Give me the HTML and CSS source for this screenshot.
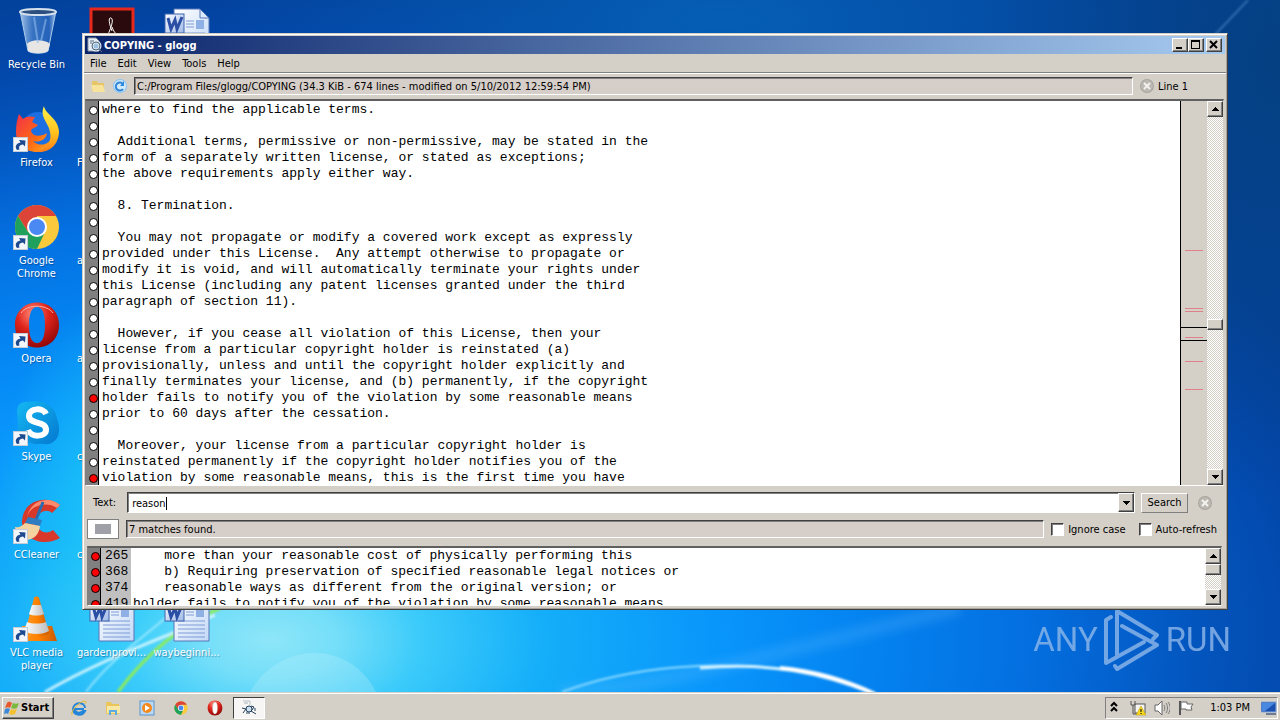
FILE: index.html
```html
<!DOCTYPE html>
<html lang="en">
<head>
    <meta charset="utf-8">
    <title>COPYING - glogg</title>
    <link rel="stylesheet" href="styles.css">
</head>
<body>

<!-- shared icon shapes -->
<svg class="defs" width="0" height="0" aria-hidden="true">
    <defs>
        <linearGradient id="paper" x1="0" y1="0" x2="1" y2="1"><stop offset="0" stop-color="#fff"/><stop offset="1" stop-color="#c3d8f7"/></linearGradient>
        <linearGradient id="blueW" x1="0" y1="0" x2="1" y2="1"><stop offset="0" stop-color="#fff"/><stop offset="1" stop-color="#9db8e6"/></linearGradient>
        <radialGradient id="opera" cx=".4" cy=".25" r=".8"><stop offset="0" stop-color="#ff8a78"/><stop offset=".45" stop-color="#e0251c"/><stop offset="1" stop-color="#8c0505"/></radialGradient>
        <linearGradient id="ffYellow" x1="0" y1="0" x2="0" y2="1"><stop offset="0" stop-color="#fff14a"/><stop offset=".6" stop-color="#ffc01c"/><stop offset="1" stop-color="#ff7a1c"/></linearGradient>
        <linearGradient id="ffRed" x1="0" y1="0" x2="1" y2="1"><stop offset="0" stop-color="#f0304a"/><stop offset=".6" stop-color="#ff6a14"/><stop offset="1" stop-color="#ffb020"/></linearGradient>
        <linearGradient id="skype" x1="0" y1="0" x2="1" y2="1"><stop offset="0" stop-color="#14b8f2"/><stop offset="1" stop-color="#0478d0"/></linearGradient>
        <linearGradient id="cone" x1="0" y1="0" x2="1" y2="0"><stop offset="0" stop-color="#ff9a2a"/><stop offset=".5" stop-color="#ff8200"/><stop offset="1" stop-color="#c95a00"/></linearGradient>
        <linearGradient id="coneW" x1="0" y1="0" x2="1" y2="0"><stop offset="0" stop-color="#fff"/><stop offset="1" stop-color="#bdbdbd"/></linearGradient>
        <linearGradient id="glass" x1="0" y1="0" x2="1" y2="0"><stop offset="0" stop-color="#bcd6f2" stop-opacity=".9"/><stop offset=".35" stop-color="#5c93d8" stop-opacity=".6"/><stop offset=".8" stop-color="#3b76c8" stop-opacity=".6"/><stop offset="1" stop-color="#c6dcf5" stop-opacity=".9"/></linearGradient>

        <symbol id="shortcut" viewBox="0 0 15 15">
            <rect x="0.5" y="0.5" width="14" height="14" fill="#f2f6fb" stroke="#c4ccd8"/>
            <path d="M4 13C1.500 9.500 3 6.500 7.500 5.500L6 3L12.500 3.500L12 9.500L10 7.500C6.500 8 5.500 9.500 6.500 12.500Z" fill="#1d4a8f"/>
        </symbol>
        <symbol id="word" viewBox="0 0 48 48">
            <path d="M11 2H37L46 11V46H11Z" fill="url(#paper)" stroke="#5876b8"/>
            <path d="M37 2V11H46Z" fill="#dce8fb" stroke="#5876b8"/>
            <rect x="33" y="13" width="8" height="9" fill="#8fb0e4"/>
            <path d="M23 14H31M23 17H31M23 20H31M15 26H42M15 30H42M15 34H42M15 38H42M15 42H42" stroke="#7d9cd6"/>
            <rect x="2" y="7" width="19" height="19" fill="url(#blueW)" stroke="#3f63ad"/>
            <path d="M5 11L8 22L12 13L14 22L19 10" fill="none" stroke="#2a4fa5" stroke-width="3"/>
        </symbol>
        <symbol id="chrome" viewBox="0 0 48 48">
            <circle cx="24" cy="24" r="22" fill="#fbc93c"/>
            <path d="M5 13L15 29L24 24L24 13H43A22 22 0 0 0 5 13Z" fill="#dc4437"/>
            <path d="M5 13A22 22 0 0 0 24 46L31 31L15 29Z" fill="#1fa15d"/>
            <circle cx="24" cy="24" r="10" fill="#fff"/>
            <circle cx="24" cy="24" r="8" fill="#4a88f4"/>
        </symbol>
        <symbol id="operaIcon" viewBox="0 0 48 48">
            <path fill="url(#opera)" fill-rule="evenodd" d="M24 1.500C37 1.500 46 11 46 24C46 37 37 46.500 24 46.500C11 46.500 2 37 2 24C2 11 11 1.500 24 1.500ZM24 6C18 6 16 14 16 24C16 34 18 42 24 42C30 42 32 34 32 24C32 14 30 6 24 6Z"/>
            <path d="M8 12C14 3 34 3 40 12" stroke="#ffb0a4" stroke-width="1" fill="none"/>
        </symbol>
        <symbol id="closeRound" viewBox="0 0 16 16">
            <circle cx="8" cy="8" r="7" fill="#a8a49e"/>
            <circle cx="8" cy="8" r="6" fill="#bcb8b2"/>
            <path d="M5 5L11 11M11 5L5 11" stroke="#f4f2ee" stroke-width="2"/>
        </symbol>
        <symbol id="up" viewBox="0 0 7 4"><path d="M3 0h1v1h1v1h1v1h1v1H0V3h1V2h1V1h1z" fill="#000"/></symbol>
        <symbol id="down" viewBox="0 0 7 4"><path d="M0 0h7v1H6v1H5v1H4v1H3V3H2V2H1V1H0z" fill="#000"/></symbol>
    </defs>
</svg>

<main class="desktop">
    <svg class="wallpaper" viewBox="0 0 1280 692" preserveAspectRatio="none" aria-hidden="true">
        <defs>
            <radialGradient id="sky" gradientUnits="userSpaceOnUse" cx="0" cy="0" r="1" gradientTransform="translate(270 640) scale(1150 650)">
                <stop offset="0" stop-color="#8ee6f8"/>
                <stop offset=".06" stop-color="#74def9"/>
                <stop offset=".13" stop-color="#3ccbfa"/>
                <stop offset=".24" stop-color="#14aef9"/>
                <stop offset=".4" stop-color="#0894fb"/>
                <stop offset=".52" stop-color="#0483f0"/>
                <stop offset=".66" stop-color="#046fe0"/>
                <stop offset=".8" stop-color="#0356bf"/>
                <stop offset=".92" stop-color="#0346a8"/>
                <stop offset="1" stop-color="#03429c"/>
            </radialGradient>
            <radialGradient id="leftGlow" gradientUnits="userSpaceOnUse" cx="0" cy="0" r="1" gradientTransform="translate(110 500) scale(110 200)">
                <stop offset="0" stop-color="#20d0f8" stop-opacity=".7"/>
                <stop offset="1" stop-color="#20d0f8" stop-opacity="0"/>
            </radialGradient>
            <radialGradient id="topGlow" gradientUnits="userSpaceOnUse" cx="0" cy="0" r="1" gradientTransform="translate(720 20) scale(500 160)">
                <stop offset="0" stop-color="#0662b8" stop-opacity=".9"/>
                <stop offset="1" stop-color="#0662b8" stop-opacity="0"/>
            </radialGradient>
            <radialGradient id="rightShade" gradientUnits="userSpaceOnUse" cx="0" cy="0" r="1" gradientTransform="translate(1280 60) scale(300 440)">
                <stop offset="0" stop-color="#06407c" stop-opacity=".8"/>
                <stop offset="1" stop-color="#06407c" stop-opacity="0"/>
            </radialGradient>
            <filter id="soft"><feGaussianBlur stdDeviation="1"/></filter>
            <filter id="softer"><feGaussianBlur stdDeviation="5"/></filter>
        </defs>
        <rect width="1280" height="692" fill="url(#sky)"/>
        <rect width="1280" height="692" fill="url(#leftGlow)"/>
        <rect width="1280" height="692" fill="url(#topGlow)"/>
        <rect width="1280" height="692" fill="url(#rightShade)"/>
        <path d="M1210 40L1248 0" stroke="#4a8ac8" stroke-width="2" opacity=".6" filter="url(#soft)"/>
        <path d="M250 692C280 640 350 640 376 692Z" fill="#c8f4fc" opacity=".25"/>
        <path d="M560 692C660 690 820 640 960 608" fill="none" stroke="#6cc0ff" stroke-width="14" opacity=".22" filter="url(#softer)"/>
        <g fill="none" filter="url(#soft)">
            <path d="M45 692C110 655 160 640 215 615" stroke="#e8fcff" stroke-width="3" opacity=".8"/>
            <path d="M86 692C110 660 140 640 180 606" stroke="#b8f0ff" stroke-width="2" opacity=".7"/>
            <path d="M118 692C145 655 180 625 225 606" stroke="#8cec5c" stroke-width="3"/>
            <path d="M562 692C640 663 720 664 760 667" stroke="#8ad8ff" stroke-width="2"/>
            <path d="M700 668C770 662 820 672 875 694" stroke="#d8f4ff" stroke-width="3"/>
            <path d="M780 668C815 671 845 680 875 694" stroke="#fff" stroke-width="4"/>
        </g>
    </svg>

    <div class="shortcuts">
        <a class="shortcut" href="#">
            <svg viewBox="0 0 48 48">
                <path d="M7 4L15 44C19 47 31 47 35 44L43 4Z" fill="url(#glass)" stroke="#a8c8ec"/>
                <ellipse cx="25" cy="5" rx="18" ry="3" fill="#2c4f80" stroke="#d4e0ec" stroke-width="2"/>
                <path d="M14 37C18 32 32 32 37 37L35 44C31 47 19 47 15 44Z" fill="#e8e6e4"/>
                <path d="M21 10L25 36M33 12L28 34" stroke="#8fbaea" opacity=".6" stroke-width="2"/>
            </svg>
            <span>Recycle Bin</span>
        </a>
        <a class="shortcut" href="#">
            <svg viewBox="0 0 48 48">
                <circle cx="25" cy="24" r="17" fill="#1c6fe0"/>
                <path d="M6 9L10 14C13 11 18 11 22 12L19 17L25 20C23 23 18 23 18 26C20 32 28 32 34 28C33 35 26 38 20 36C26 42 35 40 38 34C37 43 31 47 24 47C11 47 3 38 3 27C3 20 4 14 6 9Z" fill="url(#ffRed)"/>
                <path d="M31 1C32 9 45 13 46 26C46 40 36 48 24 47C35 44 39 35 37 27C36 18 26 12 31 1Z" fill="url(#ffYellow)"/>
                <use href="#shortcut" x="0" y="32" width="15" height="15"/>
            </svg>
            <span>Firefox</span>
        </a>
        <a class="shortcut" href="#">
            <svg viewBox="0 0 48 48">
                <use href="#chrome" width="48" height="48"/>
                <use href="#shortcut" x="0" y="32" width="15" height="15"/>
            </svg>
            <span>Google<br>Chrome</span>
        </a>
        <a class="shortcut" href="#">
            <svg viewBox="0 0 48 48">
                <use href="#operaIcon" width="48" height="48"/>
                <use href="#shortcut" x="0" y="32" width="15" height="15"/>
            </svg>
            <span>Opera</span>
        </a>
        <a class="shortcut" href="#">
            <svg viewBox="0 0 48 48">
                <path d="M4 12C4 5 10 2 16 3C30 0 43 8 44 20C48 30 46 40 40 43C35 47 30 44 25 45C12 45 4 36 5 24Z" fill="url(#skype)"/>
                <path d="M33 15C30 8 16 9 16 17C16 26 33 21 33 31C33 38 18 39 15 31" fill="none" stroke="#fff" stroke-width="6"/>
                <use href="#shortcut" x="0" y="32" width="15" height="15"/>
            </svg>
            <span>Skype</span>
        </a>
        <a class="shortcut" href="#">
            <svg viewBox="0 0 48 48">
                <path d="M47 8L39 16C34 11 24 14 24 25C24 35 34 38 40 33L47 41C32 50 10 44 9 25C9 4 33-3 47 8Z" fill="#d8382a"/>
                <path d="M47 8L44 11C34 4 17 8 14 20C17 4 35-2 47 8Z" fill="#ff8a6c"/>
                <path d="M30 5L23 23" stroke="#2a6cb0" stroke-width="3"/>
                <path d="M15 20L29 23L27 29L12 26Z" fill="#2f7cc0"/>
                <path d="M12 26L27 29C26 38 20 44 10 43C6 38 2 33 2 30C6 31 9 29 12 26Z" fill="#f4d3a0"/>
                <use href="#shortcut" x="0" y="32" width="15" height="15"/>
            </svg>
            <span>CCleaner</span>
        </a>
        <a class="shortcut" href="#">
            <svg viewBox="0 0 48 48">
                <path d="M9 31H39L44 46H6Z" fill="url(#cone)"/>
                <path d="M21 3C22 1 25 1 26 3L36 38C32 43 15 43 12 38Z" fill="url(#cone)"/>
                <path d="M19 10H28L31 19C27 21 20 21 16 19Z" fill="url(#coneW)"/>
                <path d="M14 27C19 29 28 29 33 27L36 36C30 40 17 40 11 36Z" fill="url(#coneW)"/>
                <use href="#shortcut" x="0" y="32" width="15" height="15"/>
            </svg>
            <span>VLC media<br>player</span>
        </a>

        <a class="shortcut" href="#">
            <svg viewBox="0 0 48 48">
                <rect x="3" y="2" width="42" height="44" fill="#2a0a0c" stroke="#e8281c" stroke-width="3"/>
                <path d="M24 24C20 14 21 10 23 11C26 12 24 20 16 36M24 20C26 26 30 30 36 30" fill="none" stroke="#fff" stroke-width="1"/>
            </svg>
            <span></span>
        </a>
        <a class="shortcut peek" href="#"><svg></svg><span>F</span></a>
        <a class="shortcut peek" href="#"><svg></svg><span>a</span></a>
        <a class="shortcut peek" href="#"><svg></svg><span>a</span></a>
        <a class="shortcut peek" href="#"><svg></svg><span>c</span></a>
        <a class="shortcut peek" href="#"><svg></svg><span>c</span></a>
        <a class="shortcut" href="#">
            <svg viewBox="0 0 48 48"><use href="#word" width="48" height="48"/></svg>
            <span>gardenprovi...</span>
        </a>

        <a class="shortcut" href="#">
            <svg viewBox="0 0 48 48"><use href="#word" width="48" height="48"/></svg>
            <span></span>
        </a>
        <a class="shortcut last-row" href="#">
            <svg viewBox="0 0 48 48"><use href="#word" width="48" height="48"/></svg>
            <span>waybeginni...</span>
        </a>
    </div>

    <div class="watermark">
        <span>ANY</span>
        <svg viewBox="0 0 58 64" fill="none" stroke="currentColor" stroke-width="4" stroke-linejoin="round" stroke-linecap="round">
            <path d="M8 9L3 12V55L41 34"/>
            <path d="M14 47V3L54 27L50 31"/>
            <path d="M19 18L54 37L14 61L12 58"/>
        </svg>
        <span>RUN</span>
    </div>

    <section class="window">
        <header class="titlebar">
            <svg class="icon16" viewBox="0 0 16 16">
                <path d="M1 1H9L12 4V14H1Z" fill="#e8eef6" stroke="#8c98a8"/>
                <circle cx="9" cy="9" r="4" fill="#9cc0e0" stroke="#e4eaf0" stroke-width="3"/>
                <circle cx="9" cy="9" r="4" fill="none" stroke="#486480"/>
                <path d="M3 4H7M3 6H5M12 12L15 15" stroke="#5a6c80"/>
            </svg>
            <h1>COPYING - glogg</h1>
            <div class="window-buttons">
                <button aria-label="Minimize"><svg viewBox="0 0 12 10"><path d="M2 8H8" stroke="#000" stroke-width="2"/></svg></button>
                <button aria-label="Maximize"><svg viewBox="0 0 12 10"><path d="M1 0H10V9H1ZM2 2V8H9V2Z" fill="#000" fill-rule="evenodd"/></svg></button>
                <button class="close" aria-label="Close"><svg viewBox="0 0 12 10"><path d="M2 1L9 8M9 1L2 8" stroke="#000" stroke-width="2"/></svg></button>
            </div>
        </header>

        <nav class="menubar">
            <a href="#">File</a>
            <a href="#">Edit</a>
            <a href="#">View</a>
            <a href="#">Tools</a>
            <a href="#">Help</a>
        </nav>

        <div class="toolbar">
            <button class="flat" aria-label="Open">
                <svg class="icon16" viewBox="0 0 16 16"><path d="M2 3H7L8 5H14V13H2Z" fill="#e6c566"/><path d="M1 7H13L15 14H3Z" fill="#f8e39a"/></svg>
            </button>
            <button class="flat" aria-label="Reload">
                <svg class="icon16" viewBox="0 0 16 16"><circle cx="8" cy="8" r="7" fill="#8cc4f4"/><circle cx="8" cy="8" r="6" fill="#d2eafc"/><path d="M11 6A4 4 0 1 0 11 11" fill="none" stroke="#2d86d8" stroke-width="2"/><path d="M12 3V8H8Z" fill="#2d86d8"/></svg>
            </button>
            <div class="field path">C:/Program Files/glogg/COPYING (34.3 KiB - 674 lines - modified on 5/10/2012 12:59:54 PM)</div>
            <svg class="icon16" viewBox="0 0 16 16"><use href="#closeRound" width="16" height="16"/></svg>
            <span class="line-number">Line 1</span>
        </div>

        <div class="log-view">
            <div class="lines">
                <div class="line">where to find the applicable terms.</div>
                <div class="line"></div>
                <div class="line">  Additional terms, permissive or non-permissive, may be stated in the</div>
                <div class="line">form of a separately written license, or stated as exceptions;</div>
                <div class="line">the above requirements apply either way.</div>
                <div class="line"></div>
                <div class="line">  8. Termination.</div>
                <div class="line"></div>
                <div class="line">  You may not propagate or modify a covered work except as expressly</div>
                <div class="line">provided under this License.  Any attempt otherwise to propagate or</div>
                <div class="line">modify it is void, and will automatically terminate your rights under</div>
                <div class="line">this License (including any patent licenses granted under the third</div>
                <div class="line">paragraph of section 11).</div>
                <div class="line"></div>
                <div class="line">  However, if you cease all violation of this License, then your</div>
                <div class="line">license from a particular copyright holder is reinstated (a)</div>
                <div class="line">provisionally, unless and until the copyright holder explicitly and</div>
                <div class="line">finally terminates your license, and (b) permanently, if the copyright</div>
                <div class="line match">holder fails to notify you of the violation by some reasonable means</div>
                <div class="line">prior to 60 days after the cessation.</div>
                <div class="line"></div>
                <div class="line">  Moreover, your license from a particular copyright holder is</div>
                <div class="line">reinstated permanently if the copyright holder notifies you of the</div>
                <div class="line match">violation by some reasonable means, this is the first time you have</div>
            </div>
            <svg class="overview" viewBox="0 0 26 384" preserveAspectRatio="none" shape-rendering="crispEdges">
                <path d="M4 149.500H22M4 207.500H22M4 210.500H22M4 236.500H22M4 260.500H22M4 288.500H22" stroke="#e08088"/>
                <path d="M0 226.500H26M0 239.500H26" stroke="#000"/>
            </svg>
            <div class="scrollbar">
                <button aria-label="Scroll up"><svg viewBox="0 0 7 4"><use href="#up"/></svg></button>
                <div class="track">
                    <div class="space" style="flex-grow: 201"></div>
                    <div class="thumb"></div>
                    <div class="space" style="flex-grow: 139"></div>
                </div>
                <button aria-label="Scroll down"><svg viewBox="0 0 7 4"><use href="#down"/></svg></button>
            </div>
        </div>

        <div class="search-row">
            <label for="search-text">Text:</label>
            <div class="combo">
                <input type="text" id="search-text" value="reason">
                <i class="caret"></i>
                <button aria-label="History"><svg viewBox="0 0 7 4"><use href="#down"/></svg></button>
            </div>
            <button class="search-button">Search</button>
            <button class="flat" aria-label="Stop"><svg class="icon16" viewBox="0 0 16 16"><use href="#closeRound" width="16" height="16"/></svg></button>
        </div>

        <div class="status-row">
            <button class="visibility" aria-label="Visibility"><i></i></button>
            <div class="field status">7 matches found.</div>
            <label class="check"><input type="checkbox"> Ignore case</label>
            <label class="check"><input type="checkbox"> Auto-refresh</label>
        </div>

        <div class="results">
            <div class="lines">
                <div class="line match"><b>265</b>    more than your reasonable cost of physically performing this</div>
                <div class="line match"><b>368</b>    b) Requiring preservation of specified reasonable legal notices or</div>
                <div class="line match"><b>374</b>    reasonable ways as different from the original version; or</div>
                <div class="line match"><b>419</b>holder fails to notify you of the violation by some reasonable means</div>
            </div>
            <div class="scrollbar">
                <button aria-label="Scroll up"><svg viewBox="0 0 7 4"><use href="#up"/></svg></button>
                <div class="track">
                    <div class="thumb"></div>
                    <div class="space" style="flex-grow: 1"></div>
                </div>
                <button aria-label="Scroll down"><svg viewBox="0 0 7 4"><use href="#down"/></svg></button>
            </div>
        </div>
    </section>
</main>

<footer class="taskbar">
    <button class="start">
        <svg class="icon16" viewBox="0 0 16 16">
            <path d="M3 3C5 1 6 2 8 3L6 8C5 7 3 7 1 8Z" fill="#e8582c"/>
            <path d="M9 3C11 4 13 4 15 3L13 8C11 9 9 9 7 8Z" fill="#7cb83c"/>
            <path d="M1 9C3 8 4 8 6 9L4 14C3 13 2 13 0 14Z" fill="#3c88d8"/>
            <path d="M7 9C9 10 11 10 13 9L11 14C9 15 7 15 5 14Z" fill="#f4c030"/>
        </svg>
        Start
    </button>
    <div class="quick-launch">
        <a href="#" aria-label="Internet Explorer"><svg viewBox="0 0 16 16"><path d="M13 9H4C4 13 9 14 12 11H14C11 17 2 15 2 9C2 2 14 1 14 8" fill="none" stroke="#2384d8" stroke-width="2"/><path d="M1 15C-1 11 9 1 14 1C16 2 14 4 14 4" fill="none" stroke="#e8b824" stroke-width="1"/></svg></a>
        <a href="#" aria-label="Explorer"><svg viewBox="0 0 16 16"><path d="M1 2H6L7 4H14V14H1Z" fill="#e8c65c"/><path d="M2 6H15V13H2Z" fill="#f9e8a4"/><path d="M4 15V10H12V15H10V12H6V15Z" fill="#5cacdf"/></svg></a>
        <a href="#" aria-label="Media Player"><svg viewBox="0 0 16 16"><rect x="1" y="1" width="14" height="14" fill="#b8d8f4" stroke="#5c94d0"/><circle cx="8" cy="8" r="5" fill="#f4881c"/><path d="M6 5V11L11 8Z" fill="#fff"/></svg></a>
        <a href="#" aria-label="Chrome"><svg viewBox="0 0 48 48"><use href="#chrome" x="2" y="2" width="44" height="44"/></svg></a>
        <a href="#" aria-label="Opera"><svg viewBox="0 0 48 48"><use href="#operaIcon" width="48" height="48"/><ellipse cx="24" cy="24" rx="6" ry="16" fill="#fff"/></svg></a>
    </div>
    <button class="task" aria-label="COPYING - glogg">
        <svg viewBox="0 0 16 16"><path d="M2 1H9V5" fill="none" stroke="#b8c0c8"/><path d="M3 3H7" stroke="#a8b0b8"/><circle cx="8" cy="9" r="3" fill="#cfe0f0" stroke="#24405c"/><path d="M1 8L5 9L2 13M10 6L13 7L11 10M10 11L15 14M5 13L9 13M14 8V11" fill="none" stroke="#24405c"/></svg>
    </button>
    <div class="tray">
        <svg viewBox="0 0 16 16"><path d="M5 6L8 3L11 6M5 11L8 8L11 11" fill="none" stroke="#000" stroke-width="2"/></svg>
        <svg viewBox="0 0 16 16"><rect x="5" y="4" width="10" height="9" fill="#f4f4f4" stroke="#555"/><path d="M1 1V5H5V1M3 5V14H8" fill="none" stroke="#555" stroke-width="1"/><path d="M11 6L16 15H6Z" fill="#f8d820" stroke="#b89400" stroke-width=".5"/><path d="M11 9V12M11 13V14" stroke="#000"/></svg>
        <svg viewBox="0 0 16 16"><path d="M1 5H4L8 1V15L4 11H1Z" fill="#fff" stroke="#666"/><path d="M10 5C11 7 11 9 10 11M12 3C14 6 14 10 12 13M14 2C17 6 17 10 14 14" fill="none" stroke="#777"/></svg>
        <svg viewBox="0 0 16 16"><path d="M2 1V15" stroke="#555" stroke-width="2"/><path d="M3 2H9V4H15L13 7L14 10H8V9H3Z" fill="#fff" stroke="#666"/></svg>
        <time>1:03 PM</time>
        <svg viewBox="0 0 16 16"><rect x="0" y="2" width="15" height="10" fill="#1c50b0" stroke="#88a8d8"/><path d="M1 3H14L4 11H1Z" fill="#4888e0"/><path d="M5 14H15" stroke="#6c7c94" stroke-width="2"/></svg>
    </div>
</footer>

</body>
</html>
```
FILE: styles.css
```css
* {
    box-sizing: border-box;
}

body {
    margin: 0;
    height: 100vh;
    display: flex;
    flex-direction: column;
    overflow: hidden;
    font-family: "DejaVu Sans Condensed", Tahoma, sans-serif;
    font-size: 11px;
    line-height: 13px;
    color: #000;
}

button,
input {
    font: inherit;
    color: inherit;
    margin: 0;
    padding: 0;
}

a {
    color: inherit;
    text-decoration: none;
}

svg {
    display: block;
    flex-shrink: 0;
}

.defs {
    position: absolute;
}

.icon16 {
    width: 16px;
    height: 16px;
}

/* desktop */
.desktop {
    flex: 1;
    min-height: 0;
    position: relative;
    overflow: hidden;
}

.wallpaper {
    position: absolute;
    width: 100%;
    height: 100%;
}

.shortcuts {
    position: relative;
    display: grid;
    grid-auto-flow: column;
    grid-template-rows: repeat(7, 98px);
    grid-auto-columns: 75px;
    margin-left: -1px;
}

.shortcut {
    display: flex;
    flex-direction: column;
    align-items: center;
    gap: 3px;
    padding-top: 7px;
    color: #fff;
    text-align: center;
    white-space: nowrap;
    text-shadow: 1px 1px 1px rgba(0, 20, 60, 0.4);
}

.shortcut svg {
    width: 48px;
    height: 48px;
}

.peek {
    align-items: flex-start;
    padding-left: 3px;
}

.last-row {
    grid-row: 7;
}

.watermark {
    position: absolute;
    right: 49px;
    bottom: 20px;
    display: flex;
    align-items: center;
    gap: 5px;
    color: #8fb8ea;
    opacity: 0.8;
    font-family: Roboto, sans-serif;
    font-size: 33px;
    line-height: 62px;
}

.watermark svg {
    width: 58px;
    height: 64px;
}

/* window */
.window {
    position: absolute;
    top: 33px;
    left: 82px;
    right: 52px;
    bottom: 82px;
    display: flex;
    flex-direction: column;
    padding: 1px;
    background: #d4d0c8;
    border: 1px solid #d4d0c8;
    border-right-color: #404040;
    border-bottom-color: #404040;
    box-shadow: inset 1px 1px #fff, inset -1px -1px #a8a49c;
}

.titlebar {
    display: flex;
    align-items: center;
    gap: 1px;
    height: 18px;
    margin: 1px;
    padding: 0 3px 0 2px;
    background: linear-gradient(to right, #0a246a, #a6caf0);
    color: #fff;
}

.titlebar h1 {
    flex: 1;
    margin: 0;
    font-size: 11px;
}

.window-buttons {
    display: flex;
}

.window-buttons button,
.scrollbar button,
.combo button {
    display: flex;
    align-items: center;
    justify-content: center;
    background: #d4d0c8;
    border: 1px solid;
    border-color: #fff #404040 #404040 #fff;
    box-shadow: inset -1px -1px #808080;
}

.window-buttons button {
    width: 16px;
    height: 14px;
}

.window-buttons svg {
    width: 12px;
    height: 10px;
}

.window-buttons .close {
    margin-left: 2px;
}

.menubar {
    display: flex;
    gap: 11px;
    height: 18px;
    padding: 3px 6px;
    line-height: 12px;
    border-bottom: 1px solid #808080;
}

.toolbar {
    display: flex;
    align-items: center;
    gap: 6px;
    height: 26px;
    padding: 0 38px 1px 6px;
    border-top: 1px solid #fff;
}

.flat {
    background: none;
    border: none;
}

.field {
    flex: 1;
    height: 18px;
    padding: 2px 2px 0;
    background: #d6cec8;
    border: 1px solid;
    border-color: #404040 #fff #fff #404040;
    box-shadow: inset 1px 1px #808080;
    white-space: nowrap;
    overflow: hidden;
}

.line-number {
    margin-left: -3px;
}

/* text views */
.log-view,
.results {
    display: flex;
    overflow: hidden;
    background: #fff;
    border: 1px solid;
    border-color: #606060 #d4d0c8 #fff #808080;
}

.log-view {
    flex: 1;
    min-height: 0;
    margin: 0 2px 1px 1px;
    border-top-width: 2px;
}

.lines {
    flex: 1;
    min-width: 0;
    overflow: hidden;
    background: linear-gradient(to right, #808080 12px, #000 12px, #000 13px, #fff 13px);
    font-family: "Liberation Mono", "Courier New", monospace;
    font-size: 13px;
}

.line {
    display: flex;
    height: 16px;
    line-height: 18px;
    white-space: pre;
}

.line::before {
    content: "";
    flex-shrink: 0;
    width: 7px;
    height: 7px;
    margin: 5px 5px 0 3px;
    background: #fff;
    border: 1px solid #000;
    border-radius: 50%;
}

.line.match::before {
    background: #f00;
}

.log-view .line::before {
    margin: 5px 4px 0 3px;
}

.overview {
    width: 27px;
    height: 384px;
    background: #d4d0c8;
    border-left: 1px solid #000;
}

.scrollbar {
    display: flex;
    flex-direction: column;
    width: 16px;
}

.scrollbar button {
    width: 16px;
    height: 16px;
}

.scrollbar button svg,
.combo button svg {
    width: 7px;
    height: 4px;
}

.track {
    flex: 1;
    display: flex;
    flex-direction: column;
    background: repeating-conic-gradient(#fff 0 25%, #d4d0c8 0 50%) 0 0 / 2px 2px;
}

.thumb {
    height: 11px;
    background: #d4d0c8;
    border: 1px solid;
    border-color: #fff #404040 #404040 #fff;
    box-shadow: inset -1px -1px #808080;
}

/* search */
.search-row {
    display: flex;
    align-items: center;
    height: 31px;
    padding: 0 13px 0 9px;
}

.combo {
    flex: 1;
    display: flex;
    position: relative;
    height: 21px;
    margin: 0 6px 0 11px;
    background: #fff;
    border: 1px solid;
    border-color: #404040 #fff #fff #404040;
    box-shadow: inset 1px 1px #808080;
}

.combo input {
    flex: 1;
    min-width: 0;
    padding: 2px 0 0 4px;
    border: none;
    outline: none;
    background: none;
}

.combo button {
    width: 16px;
}

.caret {
    position: absolute;
    left: 38px;
    top: 4px;
    width: 1px;
    height: 13px;
    background: #000;
}

.search-button {
    width: 47px;
    height: 20px;
    margin-right: 9px;
    background: #d4d0c8;
    border: 1px solid;
    border-color: #fff #808080 #808080 #fff;
}

.status-row {
    display: flex;
    align-items: center;
    gap: 7px;
    height: 22px;
    padding: 0 9px 0 3px;
}

.visibility {
    display: flex;
    align-items: center;
    justify-content: center;
    width: 32px;
    height: 20px;
    background: #fff;
    border: 1px solid #808080;
}

.visibility i {
    width: 16px;
    height: 10px;
    background: #a0a0a8;
}

.check {
    display: flex;
    align-items: center;
    gap: 4px;
}

.check + .check {
    margin-left: 6px;
}

.check input {
    appearance: none;
    width: 13px;
    height: 13px;
    background: #fff;
    border: 1px solid;
    border-color: #404040 #fff #fff #404040;
    box-shadow: inset 1px 1px #808080;
}

.results {
    height: 60px;
    margin: 6px 4px 2px 3px;
    border-top-width: 2px;
}

.results .lines {
    background: linear-gradient(to right, #808080 12px, #000 12px, #000 13px, #c0c0c0 13px, #c0c0c0 43px, #fff 43px);
}

.results .line {
    line-height: 16px;
}

.results .line::before {
    margin: 4px 5px 0 3px;
}

.results b {
    width: 28px;
    font-weight: normal;
}

/* taskbar */
.taskbar {
    display: flex;
    align-items: center;
    height: 28px;
    padding: 2px 2px 0;
    background: #d4d0c8;
    border-top: 1px solid #d4d0c8;
    box-shadow: inset 0 1px #fff;
}

.start {
    display: flex;
    align-items: center;
    gap: 1px;
    width: 52px;
    height: 22px;
    padding-left: 1px;
    background: #d4d0c8;
    border: 1px solid;
    border-color: #fff #404040 #404040 #fff;
    box-shadow: inset -1px -1px #808080;
    font-weight: bold;
}

.quick-launch {
    display: flex;
    gap: 18px;
    margin: 0 10px 0 17px;
}

.quick-launch svg {
    width: 16px;
    height: 16px;
}

.task {
    display: flex;
    align-items: center;
    justify-content: center;
    width: 32px;
    height: 22px;
    background: #f8f6f4;
    border: 1px solid;
    border-color: #404040 #fff #fff #404040;
}

.task svg {
    width: 16px;
    height: 16px;
}

.tray {
    display: flex;
    align-items: center;
    gap: 8px;
    height: 22px;
    margin-left: auto;
    border: 1px solid;
    border-color: #808080 #fff #fff #808080;
}

.tray svg {
    width: 16px;
    height: 16px;
}

.tray time {
    margin: 0 3px 0 8px;
}
```
